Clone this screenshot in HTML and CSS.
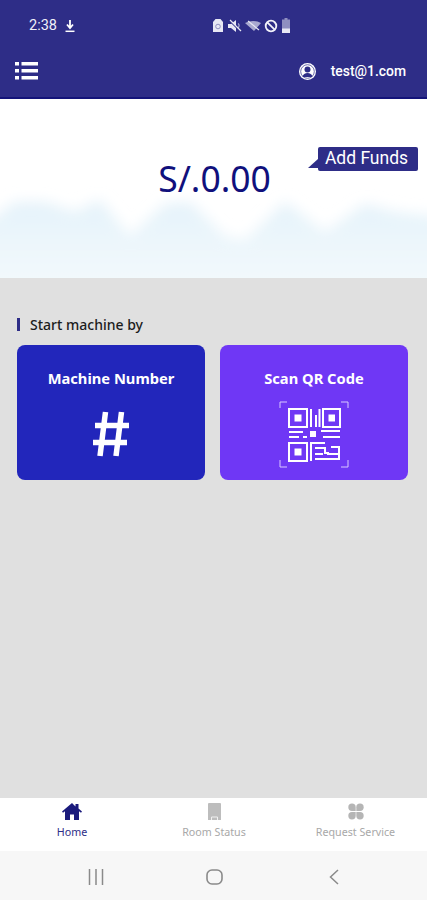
FILE: index.html
```html
<!DOCTYPE html>
<html lang="en">
<head>
    <meta charset="UTF-8">
    <meta name="viewport" content="width=device-width, initial-scale=1.0">
    <title>Home</title>
    <link rel="stylesheet" href="styles.css">
</head>
<body>
    <header class="top-bar">
        <div class="status-bar">
            <div class="status-left">
                <span class="clock">2:38</span>
                <svg class="status-download" width="12" height="14" viewBox="0 0 12 14">
                    <path d="M6 1v7M3 5.500 6 9l3-3.500" fill="none" stroke="#fff" stroke-width="1.800"/>
                    <path d="M1.500 12.300h9" stroke="#fff" stroke-width="1.500"/>
                </svg>
            </div>
            <div class="status-icons">
                <svg width="12" height="15" viewBox="0 0 12 15">
                    <path d="M3.500 1h5l2.500 3v10H1V4z" fill="#e8e8f4"/>
                    <circle cx="6" cy="8.500" r="2.300" fill="none" stroke="#8f8fc0" stroke-width="1"/>
                </svg>
                <svg width="15" height="14" viewBox="0 0 15 14">
                    <path d="M1 5h3l5-4v12L4 9H1z" fill="#e8e8f4"/>
                    <path d="M11 4.500c1.500 1 1.500 3 0 4.500" fill="none" stroke="#a9a9d0" stroke-width="1.200"/>
                    <path d="M2 1l12 12" stroke="#2e2d87" stroke-width="1.500"/>
                    <path d="M3 1l11 11" stroke="#e8e8f4" stroke-width="1.200"/>
                </svg>
                <svg width="16" height="12" viewBox="0 0 16 12">
                    <path d="M0 3Q8-1 16 3L9 11z" fill="#a9a9d0"/>
                    <path d="M3 1l11 9" stroke="#e8e8f4" stroke-width="1.200"/>
                </svg>
                <svg width="14" height="14" viewBox="0 0 14 14">
                    <circle cx="7" cy="7" r="5.300" fill="none" stroke="#f2f2fa" stroke-width="1.800"/>
                    <path d="M3.300 3.300l7.400 7.400" stroke="#f2f2fa" stroke-width="1.800"/>
                </svg>
                <svg width="10" height="15" viewBox="0 0 10 15">
                    <path d="M3.500 0h3v1.500H9V15H1V1.500h2.500z" fill="#8f8fc0"/>
                    <rect x="1" y="10.500" width="8" height="4.500" fill="#e8e8f4"/>
                </svg>
            </div>
        </div>
        <div class="app-bar">
            <svg class="menu-icon" width="24" height="18" viewBox="0 0 24 18">
                <path d="M0 0h4v3.400H0zM0 7h4v3.400H0zM0 14h4v3.400H0zM6.500 0H23v3.400H6.500zM6.500 7H23v3.400H6.500zM6.500 14H23v3.400H6.500z" fill="#fff"/>
            </svg>
            <div class="account">
                <svg width="17" height="17" viewBox="0 0 17 17">
                    <circle cx="8.500" cy="8.500" r="8.500" fill="#fff"/>
                    <circle cx="8.500" cy="8.500" r="6.800" fill="none" stroke="#2e2d87" stroke-width="0.700"/>
                    <circle cx="8.500" cy="6.500" r="3" fill="#2e2d87"/>
                    <path d="M3.500 14c.6-3 2.500-4 5-4s4.400 1 5 4z" fill="#2e2d87"/>
                </svg>
                <span class="account-name">test@1.com</span>
            </div>
        </div>
    </header>

    <section class="balance">
        <svg class="mountains" viewBox="0 0 427 100" preserveAspectRatio="none">
            <defs>
                <filter id="soft" x="-10%" y="-30%" width="120%" height="160%"><feGaussianBlur stdDeviation="7"/></filter>
                <linearGradient id="fade" x1="0" y1="0" x2="0" y2="1">
                    <stop offset="0" stop-color="#e4f2fa"/>
                    <stop offset="0.600" stop-color="#f0f8fc"/>
                    <stop offset="1" stop-color="#f4fafd"/>
                </linearGradient>
            </defs>
            <path d="M-20 130V50L15 24 45 24 75 34 100 22 130 58 165 26 190 24 225 58 245 62 285 24 325 54 365 26 395 34 450 40V130z" fill="url(#fade)" filter="url(#soft)"/>
        </svg>
        <div class="amount">S/.0.00</div>
        <a class="add-funds">Add Funds</a>
    </section>

    <main class="content">
        <h2 class="section-title">Start machine by</h2>
        <div class="start-options">
            <div class="start-card card-number">
                <div class="card-title">Machine Number</div>
                <svg class="hash-icon" width="38" height="48" viewBox="0 0 38 48">
                    <path d="M13.500 2 8 46M29.500 2 24 46M3 15.500h34M1 32.500h34" fill="none" stroke="#fff" stroke-width="5.500"/>
                </svg>
            </div>
            <div class="start-card card-qr">
                <div class="card-title">Scan QR Code</div>
                <svg class="qr-icon" width="70" height="67" viewBox="0 0 70 67" fill="none" stroke="#fff">
                    <path d="M1 7V1h7M62 1h7v6M1 59v7h7M62 66h7v-7" stroke-width="1" stroke="#d9c8ff"/>
                    <g stroke-width="2">
                        <rect x="10" y="8" width="18" height="18"/>
                        <rect x="44" y="8" width="17" height="18"/>
                        <rect x="10" y="42" width="18" height="18"/>
                    </g>
                    <path d="M15.500 13.500h7v7h-7zM49.500 13.500h6.500v7h-6.500zM15.500 47.500h7v7h-7z" fill="#fff" stroke="none"/>
                    <path d="M32 8v18M37 14v12M40.500 8v18" stroke-width="2"/>
                    <path d="M10 31h14M10 36h10M24 36h4M42 30h19M44 36h17" stroke-width="2"/>
                    <path d="M31 30h6v6h-6z" fill="#fff" stroke="none"/>
                    <path d="M32 60V42h14M36 47h10v5h4M36 53h8M36 58h25M52 46h9M60 46v12M48 53h12" stroke-width="2"/>
                </svg>
            </div>
        </div>
    </main>

    <nav class="tabs">
        <div class="tab tab-active">
            <svg width="20" height="17" viewBox="0 0 20 17">
                <path d="M10 0 0 8.500l1 1.300L3 8.200V17h5v-5.500h4V17h5V8.200l2 1.600 1-1.300-3.500-3V1h-3v2.500z" fill="#1a1a7c"/>
            </svg>
            <span>Home</span>
        </div>
        <div class="tab">
            <svg width="13" height="17" viewBox="0 0 13 17">
                <path d="M1 0h11a1 1 0 0 1 1 1v16H0V1a1 1 0 0 1 1-1z" fill="#bdbdbd"/>
                <path d="M3.500 17v-3h6v3" fill="none" stroke="#f1f1f1" stroke-width="1"/>
            </svg>
            <span>Room Status</span>
        </div>
        <div class="tab">
            <svg width="16" height="16" viewBox="0 0 16 16" fill="#b5b5b5">
                <path d="M4 0a3.700 3.700 0 0 1 3.700 3.700v3.700H4A3.700 3.700 0 0 1 4 0z"/>
                <path d="M12 0a3.700 3.700 0 0 0-3.700 3.700v3.700H12A3.700 3.700 0 0 0 12 0z"/>
                <path d="M4 16a3.700 3.700 0 0 0 3.700-3.700V8.600H4A3.700 3.700 0 0 0 4 16z"/>
                <path d="M12 16a3.700 3.700 0 0 1-3.700-3.700V8.600H12a3.700 3.700 0 0 1 0 7.400z"/>
            </svg>
            <span>Request Service</span>
        </div>
    </nav>

    <div class="system-nav">
        <svg width="16" height="16" viewBox="0 0 16 16">
            <path d="M1.500 0v16M8 0v16M14.500 0v16" stroke="#8a8a8a" stroke-width="1.500"/>
        </svg>
        <svg width="17" height="16" viewBox="0 0 17 16">
            <rect x="1" y="1" width="15" height="14" rx="5" fill="none" stroke="#8a8a8a" stroke-width="1.600"/>
        </svg>
        <svg width="10" height="16" viewBox="0 0 10 16">
            <path d="M9 1 1.500 8 9 15" fill="none" stroke="#8a8a8a" stroke-width="1.500"/>
        </svg>
    </div>
</body>
</html>
```

FILE: styles.css
```css
* {
    margin: 0;
    padding: 0;
    box-sizing: border-box;
}

body {
    width: 427px;
    height: 900px;
    display: flex;
    flex-direction: column;
    overflow: hidden;
    background-color: #e0e0e0;
    font-family: "Noto Sans", Roboto, sans-serif;
}

.top-bar {
    height: 99px;
    background-color: #2e2d87;
    border-bottom: 2px solid #14147a;
    color: white;
}

.status-bar {
    height: 46px;
    padding-top: 17px;
    position: relative;
}

.status-left {
    display: flex;
    align-items: center;
    gap: 7px;
    margin-left: 29px;
}

.clock {
    font-size: 14.500px;
    line-height: 17px;
    font-family: Roboto, sans-serif;
    color: #f0f0f8;
}

.status-icons {
    position: absolute;
    left: 212px;
    top: 18px;
    display: flex;
    align-items: center;
    gap: 3px;
}

.app-bar {
    display: flex;
    justify-content: space-between;
    align-items: center;
    padding: 0 21px 0 15px;
    height: 50px;
}

.account {
    display: flex;
    align-items: center;
    gap: 15px;
}

.account-name {
    font-size: 13.900px;
    font-weight: 500;
    font-family: Roboto, sans-serif;
}

.balance {
    height: 179px;
    background-color: white;
    position: relative;
    display: flex;
    justify-content: center;
    padding-top: 54px;
}

.mountains {
    position: absolute;
    left: 0;
    bottom: 0;
    width: 427px;
    height: 100px;
}

.amount {
    position: relative;
    font-size: 35.500px;
    line-height: 50px;
    color: #10107c;
    margin-left: 2px;
}

.add-funds {
    position: absolute;
    left: 318px;
    top: 48px;
    width: 100px;
    height: 24px;
    padding-right: 3px;
    background-color: #2e2d87;
    border-radius: 2px;
    color: white;
    font-size: 17.500px;
    line-height: 23px;
    text-align: center;
    font-family: Roboto, sans-serif;
}

.add-funds::before {
    content: "";
    position: absolute;
    left: -10px;
    bottom: 3px;
    width: 10px;
    height: 9px;
    background-color: #2e2d87;
    clip-path: polygon(100% 0, 100% 100%, 0 100%);
}

.content {
    flex: 1;
    padding: 40px 19px 0 17px;
}

.section-title {
    font-size: 14px;
    font-weight: 500;
    line-height: 13px;
    color: #1c1c1c;
    border-left: 3px solid #2e2d87;
    padding-left: 10px;
}

.start-options {
    display: grid;
    grid-template-columns: 188px 188px;
    gap: 15px;
    margin-top: 14px;
}

.start-card {
    height: 135px;
    border-radius: 8px;
    display: flex;
    flex-direction: column;
    align-items: center;
    padding-top: 22px;
    color: white;
}

.card-number {
    background-color: #2226bb;
}

.card-qr {
    background-color: #6f37f5;
}

.card-title {
    font-size: 14.700px;
    font-weight: 700;
    line-height: 22px;
}

.hash-icon {
    margin-top: 21px;
}

.qr-icon {
    margin-top: 12px;
}

.tabs {
    height: 53px;
    background-color: white;
    display: grid;
    grid-template-columns: 144px 140px 143px;
}

.tab {
    display: flex;
    flex-direction: column;
    align-items: center;
    justify-content: flex-start;
    padding-top: 5px;
    height: 53px;
    gap: 5px;
    font-size: 10.700px;
    line-height: 14px;
    color: #a8a8a8;
}

.tab svg {
    height: 17px;
}

.tab-active {
    color: #2e2d87;
}

.system-nav {
    height: 49px;
    background-color: #f7f7f7;
    display: grid;
    grid-template-columns: 119px 119px 119px;
    align-items: center;
    justify-items: center;
    padding: 3px 0 0 36px;
}
```
